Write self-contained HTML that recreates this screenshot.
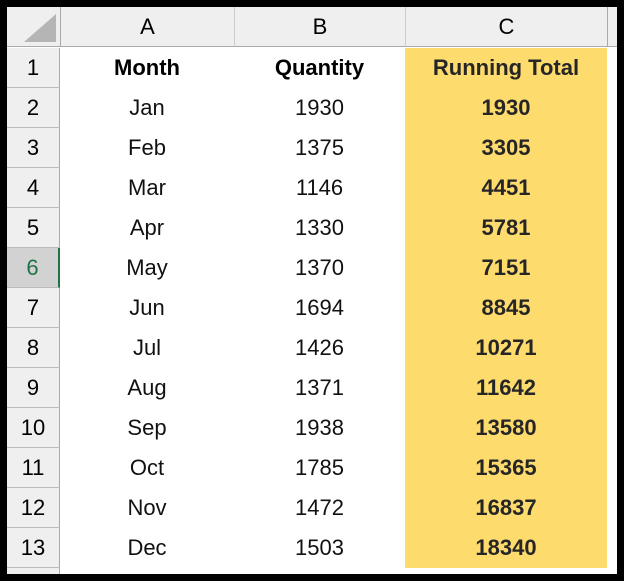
<html><head><style>
body{margin:0;width:624px;height:581px;background:#000;position:relative;overflow:hidden;font-family:"Liberation Sans",sans-serif}
#w{position:absolute;left:7px;top:7px;width:610px;height:567px;background:#fff}
.h{position:absolute;background:#efefef;color:#000;font-size:22px;text-align:center;box-sizing:border-box}
.c{position:absolute;height:40px;line-height:40px;text-align:center;font-size:22px;color:#111}
.y{background:#fddb6d;font-weight:bold;color:#262626}
</style></head><body><div id="w"></div>
<div class="h" style="left:7px;top:7px;width:610px;height:40px;border-bottom:1px solid #aaa"></div>
<svg style="position:absolute;left:20px;top:12px" width="38" height="32"><polygon points="36,2 36,30 4,30" fill="#b5b5b5"/></svg>
<div class="h" style="left:60px;top:7px;width:174px;height:40px;line-height:40px;border-left:1px solid #aaa;border-bottom:1px solid #aaa">A</div>
<div class="h" style="left:234px;top:7px;width:171px;height:40px;line-height:40px;border-left:1px solid #ccc;border-bottom:1px solid #aaa">B</div>
<div class="h" style="left:405px;top:7px;width:203px;height:40px;line-height:40px;border-left:1px solid #ccc;border-right:1px solid #aaa;border-bottom:1px solid #aaa">C</div>
<div id="rows"></div>
<script>
var d=[["Month","Quantity","Running Total"],["Jan",1930,1930],["Feb",1375,3305],["Mar",1146,4451],["Apr",1330,5781],["May",1370,7151],["Jun",1694,8845],["Jul",1426,10271],["Aug",1371,11642],["Sep",1938,13580],["Oct",1785,15365],["Nov",1472,16837],["Dec",1503,18340]];
var h="";
h+='<div style="position:absolute;left:405px;top:48px;width:202px;height:519px;background:#fddb6d"></div>';
for(var i=0;i<13;i++){var t=48+i*40;
var sel=i==5;
h+='<div class="h" style="left:7px;top:'+t+'px;width:53px;height:40px;line-height:40px;border-right:'+(sel?'2px solid #217346':'1px solid #aaa')+';border-bottom:1px solid #bbb;'+(sel?'background:#d2d2d2;color:#217346;':'')+'">'+(i+1)+'</div>';
var b=i==0?'font-weight:bold;color:#000;':'';
h+='<div class="c" style="left:60px;top:'+t+'px;width:174px;'+b+'">'+d[i][0]+'</div>';
h+='<div class="c" style="left:234px;top:'+t+'px;width:171px;'+b+'">'+d[i][1]+'</div>';
h+='<div class="c y" style="left:405px;top:'+t+'px;width:202px;">'+d[i][2]+'</div>';}
h+='<div class="h" style="left:7px;top:568px;width:53px;height:6px;border-right:1px solid #aaa"></div>';
document.getElementById("rows").innerHTML=h;
</script></body></html>
